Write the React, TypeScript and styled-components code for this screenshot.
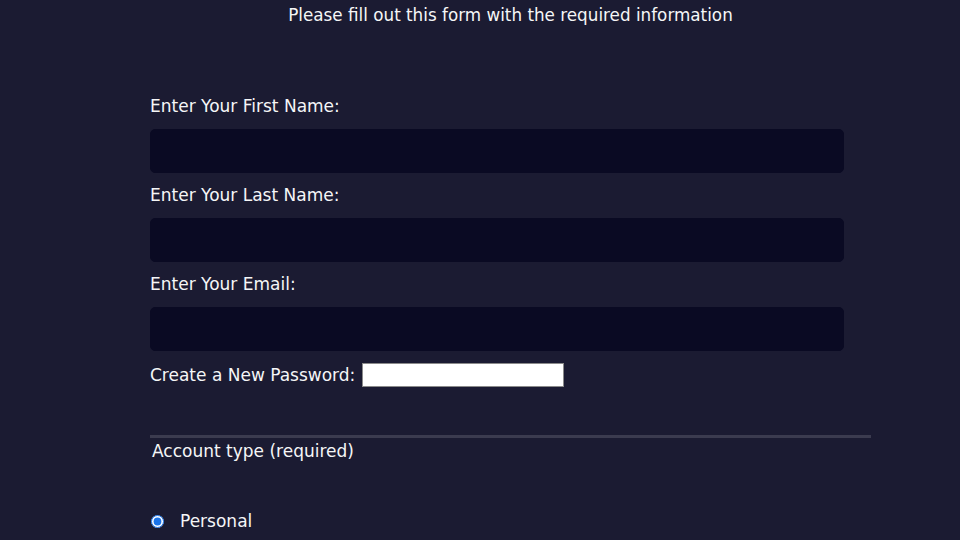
import React from "react";
import styled, { createGlobalStyle } from "styled-components";

const Global = createGlobalStyle`
  html, body {
    margin: 0;
    padding: 0;
    background: #1b1b32;
    color: #f5f6f7;
    font-family: "DejaVu Sans", Tahoma, Verdana, sans-serif;
    font-size: 17px;
  }
  body { overflow: hidden; }
`;

const Page = styled.div`
  width: 960px;
  height: 540px;
  overflow: hidden;
  background: #1b1b32;
`;

const Column = styled.div`
  margin-left: 150px;
  width: 721px;
  display: flex;
  flex-direction: column;
`;

const Intro = styled.p`
  margin: 4px 0 0 0;
  line-height: 22px;
  text-align: center;
  font-size: 16.8px;
`;

const Fieldset = styled.div`
  margin-top: 68.5px;
  padding-bottom: 48px;
  border-bottom: 3px solid #3b3b4f;
  display: flex;
  flex-direction: column;
`;

const Field = styled.div`
  display: flex;
  flex-direction: column;
  margin-bottom: 11px;
`;

const Label = styled.label`
  display: block;
  line-height: 22px;
  font-size: 17px;
`;

const TextInput = styled.input`
  margin-top: 12px;
  width: 694px;
  height: 44px;
  box-sizing: border-box;
  background: #0a0a23;
  border: 1px solid #0a0a23;
  border-radius: 5px;
  color: #fff;
  outline: none;
  font-family: inherit;
`;

const PasswordRow = styled.div`
  display: flex;
  align-items: center;
  gap: 7px;
  margin-top: 1.5px;
`;

const PasswordInput = styled.input`
  width: 202px;
  height: 24px;
  box-sizing: border-box;
  background: #fff;
  border: 1px solid #8a8a8a;
  border-radius: 0;
  margin: 0;
  outline: none;
`;

const Legend = styled.div`
  margin: 2px 0 0 2px;
  line-height: 22px;
  font-size: 17px;
`;

const RadioRow = styled.label`
  display: flex;
  align-items: center;
  gap: 16px;
  margin-top: 48px;
  line-height: 22px;
  font-size: 17px;
`;

const Radio = styled.input`
  width: 13px;
  height: 13px;
  margin: 0 0 0 1px;
  accent-color: #1a73e8;
`;

export default function App() {
  return (
    <Page>
      <Global />
      <Column>
        <Intro>Please fill out this form with the required information</Intro>
        <Fieldset>
          <Field>
            <Label>Enter Your First Name:</Label>
            <TextInput type="text" />
          </Field>
          <Field>
            <Label>Enter Your Last Name:</Label>
            <TextInput type="text" />
          </Field>
          <Field>
            <Label>Enter Your Email:</Label>
            <TextInput type="email" />
          </Field>
          <PasswordRow>
            <Label>Create a New Password:</Label>
            <PasswordInput type="password" />
          </PasswordRow>
        </Fieldset>
        <Legend>Account type (required)</Legend>
        <RadioRow>
          <Radio type="radio" name="account" defaultChecked />
          Personal
        </RadioRow>
      </Column>
    </Page>
  );
}
